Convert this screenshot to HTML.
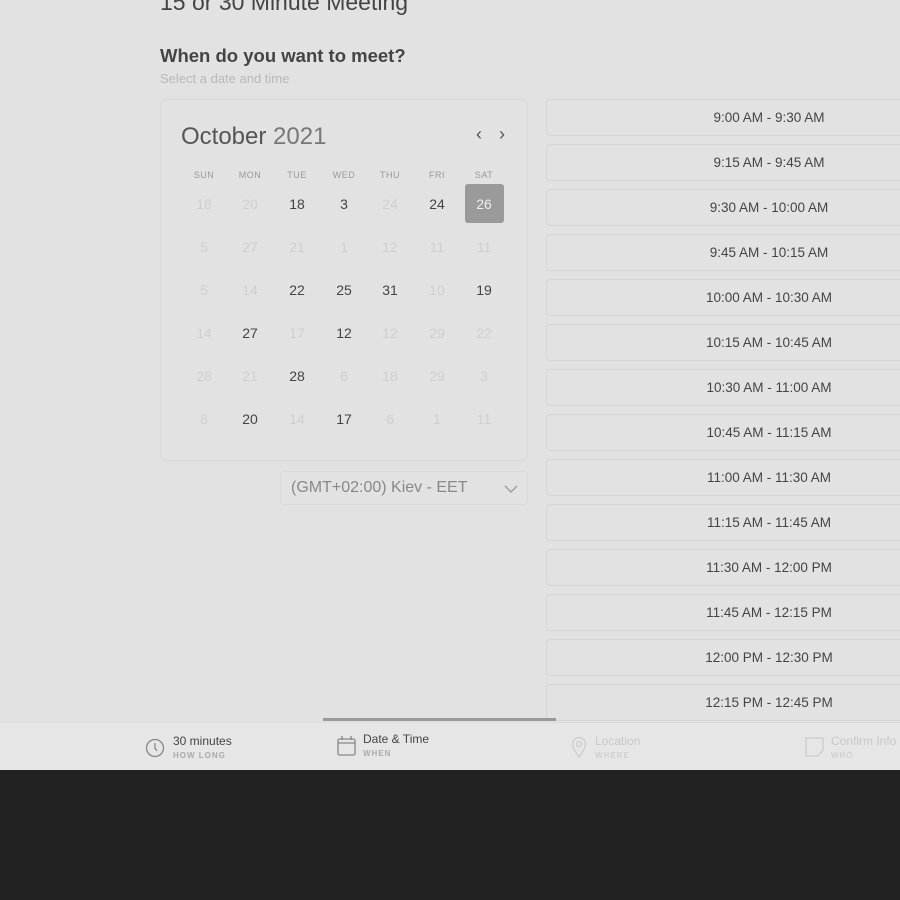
<!DOCTYPE html>
<html><head><style>
*{margin:0;padding:0;box-sizing:border-box}
body{width:900px;height:900px;background:#222;font-family:"Liberation Sans",sans-serif;position:relative;overflow:hidden}
.main{position:absolute;left:0;top:0;width:900px;height:722px;background:#e2e2e2;overflow:hidden}
.abs{position:absolute}
.cal{left:160px;top:99px;width:368px;height:362px;border:1px solid #d9d9d9;border-radius:4px}
.day{position:absolute;width:40px;text-align:center;font-size:14px;color:#444;transform:translate(-50%,-50%)}
.dim{color:#cfcfcf}
.hd{font-size:9px;color:#999;letter-spacing:.5px}
.slot{position:absolute;left:546px;width:446px;height:37px;border:1px solid #d6d6d6;border-radius:4px;text-align:center;line-height:35px;font-size:13.5px;color:#444}
.bar{position:absolute;left:0;top:722px;width:900px;height:48px;background:#e6e6e6;border-top:1px solid #dcdcdc}
.t1{font-size:12px;color:#444}
.t2{font-size:8px;color:#aaa;letter-spacing:1px;font-weight:bold;margin-top:3px}
</style></head><body>
<div class="main">
<div class="abs" style="left:160px;top:-11px;font-size:23px;color:#444">15 or 30 Minute Meeting</div>
<div class="abs" style="left:160px;top:45px;font-size:18.5px;font-weight:bold;color:#444">When do you want to meet?</div>
<div class="abs" style="left:160px;top:71px;font-size:13px;color:#b8b8b8">Select a date and time</div>
<div class="abs cal"></div>
<div class="abs" style="left:181px;top:123px;font-size:24px;color:#555">October <span style="color:#777">2021</span></div>
<div class="abs" style="left:476px;top:124px;font-size:18px;color:#555">‹</div>
<div class="abs" style="left:499px;top:124px;font-size:18px;color:#555">›</div>
<div class="abs" style="left:465px;top:184px;width:39px;height:39px;background:#9a9a9a;border-radius:3px"></div>
<div id="cal"></div>
<div class="abs" style="left:280px;top:471px;width:248px;height:34px;border:1px solid #d9d9d9;border-radius:4px;font-size:16px;color:#888;line-height:32px;padding-left:10px">(GMT+02:00) Kiev - EET
<svg style="position:absolute;right:9px;top:13px" width="14" height="8"><path d="M1 1l6 6 6-6" stroke="#999" fill="none" stroke-width="1.3"/></svg></div>
<div class="slot" style="top:99px">9:00 AM - 9:30 AM</div>
<div class="slot" style="top:144px">9:15 AM - 9:45 AM</div>
<div class="slot" style="top:189px">9:30 AM - 10:00 AM</div>
<div class="slot" style="top:234px">9:45 AM - 10:15 AM</div>
<div class="slot" style="top:279px">10:00 AM - 10:30 AM</div>
<div class="slot" style="top:324px">10:15 AM - 10:45 AM</div>
<div class="slot" style="top:369px">10:30 AM - 11:00 AM</div>
<div class="slot" style="top:414px">10:45 AM - 11:15 AM</div>
<div class="slot" style="top:459px">11:00 AM - 11:30 AM</div>
<div class="slot" style="top:504px">11:15 AM - 11:45 AM</div>
<div class="slot" style="top:549px">11:30 AM - 12:00 PM</div>
<div class="slot" style="top:594px">11:45 AM - 12:15 PM</div>
<div class="slot" style="top:639px">12:00 PM - 12:30 PM</div>
<div class="slot" style="top:684px">12:15 PM - 12:45 PM</div>
<div class="abs" style="left:323px;top:718px;width:233px;height:3px;background:#9a9a9a"></div>
</div>
<div class="bar">
<svg class="abs" style="left:145px;top:15px" width="20" height="20"><circle cx="10" cy="10" r="8.5" stroke="#888" fill="none" stroke-width="1.3"/><path d="M10 5v5l2 3" stroke="#888" fill="none" stroke-width="1.3"/></svg>
<div class="abs" style="left:173px;top:11px"><div class="t1">30 minutes</div><div class="t2">HOW LONG</div></div>
<svg class="abs" style="left:337px;top:12px" width="20" height="22"><rect x="1" y="4" width="17" height="16" rx="1.5" stroke="#888" fill="none" stroke-width="1.3"/><path d="M1 8h17M5 1v4M14 1v4" stroke="#888" stroke-width="1.3"/></svg>
<div class="abs" style="left:363px;top:9px"><div class="t1">Date &amp; Time</div><div class="t2">WHEN</div></div>
<svg class="abs" style="left:571px;top:13px" width="16" height="22"><path d="M8 21C3 14 1.5 11 1.5 8a6.5 6.5 0 0113 0c0 3-1.5 6-6.5 13z" stroke="#ccc" fill="none" stroke-width="1.3"/><circle cx="8" cy="8" r="2.5" stroke="#ccc" fill="none" stroke-width="1.3"/></svg>
<div class="abs" style="left:595px;top:11px;color:#c8c8c8"><div class="t1" style="color:#c8c8c8">Location</div><div class="t2" style="color:#d0d0d0">WHERE</div></div>
<svg class="abs" style="left:805px;top:14px" width="20" height="20"><path d="M1 1h17v12l-5 6H1z" stroke="#ccc" fill="none" stroke-width="1.3"/></svg>
<div class="abs" style="left:831px;top:11px;white-space:nowrap"><div class="t1" style="color:#c8c8c8">Confirm Info</div><div class="t2" style="color:#d0d0d0">WHO</div></div>
</div>
<script>
var xs=[204,250,297,344,390,437,484],ys=[204,247,290,333,376,419];
var h=["SUN","MON","TUE","WED","THU","FRI","SAT"];
var d=[["18","20","18","3","24","24","26"],["5","27","21","1","12","11","11"],["5","14","22","25","31","10","19"],["14","27","17","12","12","29","22"],["28","21","28","6","18","29","3"],["8","20","14","17","6","1","11"]];
var on=[[0,0,1,1,0,1,2],[0,0,0,0,0,0,0],[0,0,1,1,1,0,1],[0,1,0,1,0,0,0],[0,0,1,0,0,0,0],[0,1,0,1,0,0,0]];
var s="";
for(var i=0;i<7;i++)s+='<div class="day hd" style="left:'+xs[i]+'px;top:175px">'+h[i]+'</div>';
for(var r=0;r<6;r++)for(var c=0;c<7;c++){var o=on[r][c];s+='<div class="day'+(o==0?' dim':'')+'" style="left:'+xs[c]+'px;top:'+ys[r]+'px;'+(o==2?'color:#eee':'')+'">'+d[r][c]+'</div>';}
document.getElementById("cal").innerHTML=s;
</script>
</body></html>
